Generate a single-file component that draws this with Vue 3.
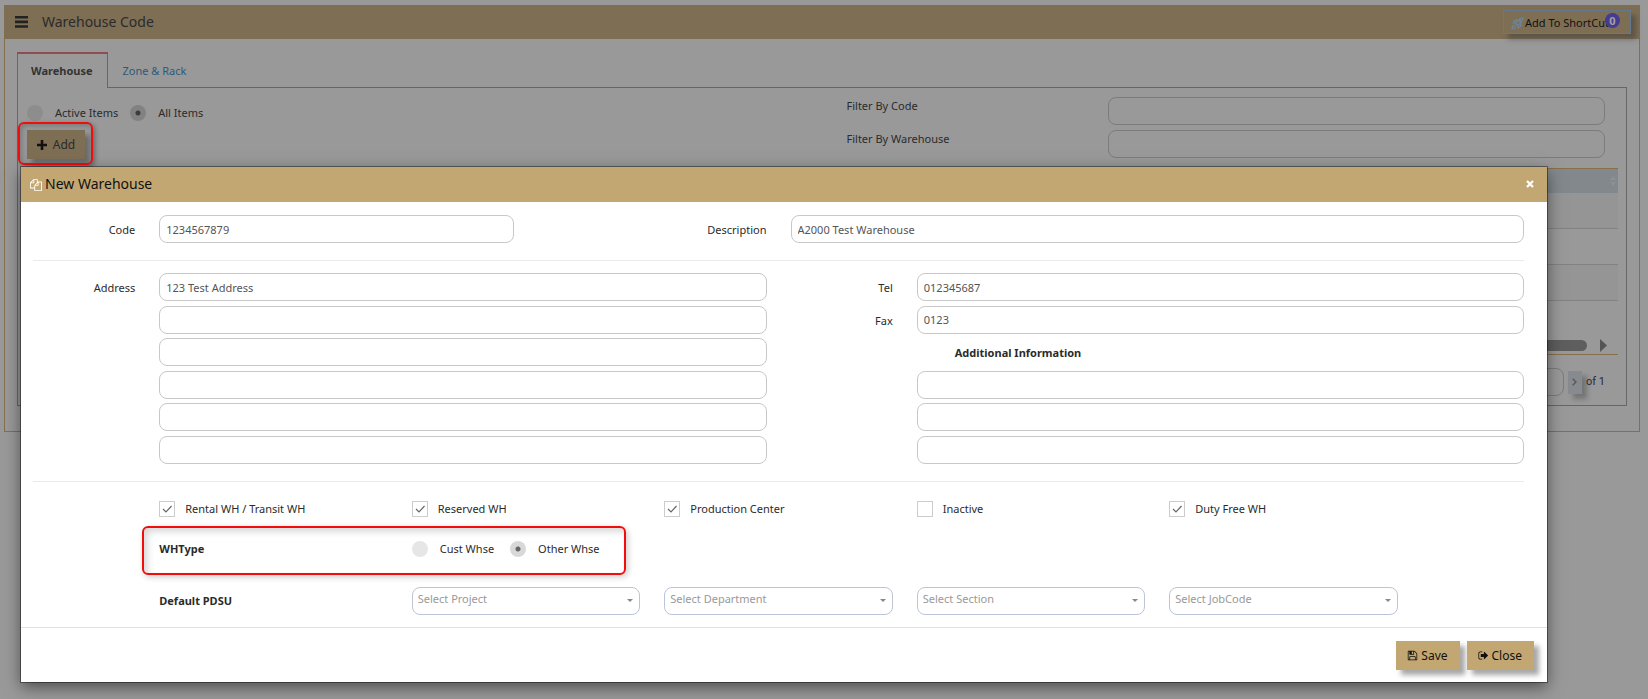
<script setup>
import { ref } from 'vue'

const filter = ref('all')
const whType = ref('other')
const code = ref('1234567879')
const description = ref('A2000 Test Warehouse')
const address = ref(['123 Test Address', '', '', '', '', ''])
const tel = ref('012345687')
const fax = ref('0123')
const extra = ref(['', '', ''])
const flags = ref([
  { id: 'rental', label: 'Rental WH / Transit WH', on: true },
  { id: 'reserved', label: 'Reserved WH', on: true },
  { id: 'production', label: 'Production Center', on: true },
  { id: 'inactive', label: 'Inactive', on: false },
  { id: 'duty', label: 'Duty Free WH', on: true }
])
const pdsu = ['Project', 'Department', 'Section', 'JobCode']
const rows = [1, 2, 3, 4]
</script>

<template>
  <div class="page">
    <section class="panel">
      <header class="panel-head">
        <button class="menu" type="button" aria-label="Menu">
          <svg viewBox="0 0 13 12"><path d="M0 0h13v2.600H0zM0 4.600h13v2.600H0zM0 9.200h13v2.600H0z" /></svg>
        </button>
        <h1>Warehouse Code</h1>
        <button class="shortcut" type="button">
          <svg viewBox="0 0 24 24" fill="none" stroke="currentColor" stroke-width="2.400">
            <path d="M9 12C12 5 16 2 22 2c0 6-3 10-10 13zM9 11H4l3-5h5M13 15v5l5-3v-5M5 15c-2 1-3 3-3 7 4 0 6-1 7-3M6 18l3-3" />
            <circle cx="16.500" cy="7.500" r="1.500" />
          </svg>
          <span>Add To ShortCut</span>
          <b class="badge">0</b>
        </button>
      </header>

      <div class="panel-body">
        <nav class="tabs">
          <a class="tab active" href="#warehouse">Warehouse</a>
          <a class="tab" href="#zone">Zone &amp; Rack</a>
        </nav>
        <div class="tab-body">
          <div class="tools">
            <div>
              <div class="radios">
                <label><input v-model="filter" type="radio" name="filter" value="active"><span>Active Items</span></label>
                <label><input v-model="filter" type="radio" name="filter" value="all"><span>All Items</span></label>
              </div>
              <div class="add-wrap">
                <button class="add" type="button">
                  <svg viewBox="0 0 10 10"><path d="M3.700 0h2.600v3.700H10v2.600H6.300V10H3.700V6.300H0V3.700h3.700z" /></svg>
                  Add
                </button>
                <div class="marker add-marker"></div>
              </div>
            </div>
            <div class="filters">
              <label for="f-code">Filter By Code</label>
              <input id="f-code" type="text">
              <label for="f-wh">Filter By Warehouse</label>
              <input id="f-wh" type="text">
            </div>
          </div>

          <table class="grid-table">
            <thead>
              <tr><th><svg viewBox="0 0 6 10"><path d="M3 0l3 4H0zM3 10l3-4H0z" /></svg></th></tr>
            </thead>
            <tbody>
              <tr v-for="r in rows" :key="r"><td></td></tr>
            </tbody>
          </table>
          <div class="scroll">
            <div class="thumb"></div>
            <svg viewBox="0 0 7 13"><path d="M0 0l7 6.500L0 13z" /></svg>
          </div>
          <div class="pager">
            <input type="text" value="1" aria-label="Page">
            <button type="button" aria-label="Next page">
              <svg viewBox="0 0 5 8" fill="none" stroke="currentColor" stroke-width="1.300"><path d="M.7.700L4 4 .7 7.300" /></svg>
            </button>
            <span>of 1</span>
          </div>
        </div>
      </div>
    </section>

    <div class="dialog" role="dialog" aria-labelledby="dlg-title">
      <header class="dialog-head">
        <svg viewBox="0 0 1792 1792"><path d="M1696 384q40 0 68 28t28 68v1216q0 40-28 68t-68 28h-960q-40 0-68-28t-28-68v-288h-544q-40 0-68-28t-28-68v-672q0-40 20-88t48-76l408-408q28-28 76-48t88-20h416q40 0 68 28t28 68v328q68-40 128-40h416zm-544 213l-299 299h299v-299zm-640-384l-299 299h299v-299zm196 647l316-316v-416h-384v416q0 40-28 68t-68 28h-416v640h512v-256q0-40 20-88t48-76zm956 804v-1152h-384v416q0 40-28 68t-68 28h-416v640h896z" /></svg>
        <h2 id="dlg-title">New Warehouse</h2>
        <button type="button" aria-label="Close dialog">
          <svg viewBox="0 0 8 8" fill="none" stroke="currentColor" stroke-width="2.200"><path d="M1 1l6 6M7 1L1 7" /></svg>
        </button>
      </header>

      <div class="dialog-body">
        <div class="cols">
          <label class="lab" for="code">Code</label>
          <div class="w3"><input id="code" v-model="code" type="text"></div>
          <label class="lab w2" for="desc">Description</label>
          <div class="w6"><input id="desc" v-model="description" type="text"></div>
        </div>
        <hr>
        <div class="cols address">
          <label class="lab" for="addr0">Address</label>
          <div class="w5"><input id="addr0" v-model="address[0]" type="text"></div>
          <label class="lab" for="tel">Tel</label>
          <div class="w5"><input id="tel" v-model="tel" type="text"></div>

          <div class="w5 from2"><input v-model="address[1]" type="text" aria-label="Address line 2"></div>
          <label class="lab" for="fax">Fax</label>
          <div class="w5"><input id="fax" v-model="fax" type="text"></div>

          <div class="w5 from2"><input v-model="address[2]" type="text" aria-label="Address line 3"></div>
          <strong class="extra">Additional Information</strong>

          <template v-for="n in 3" :key="n">
            <div class="w5 from2"><input v-model="address[n + 2]" type="text" :aria-label="'Address line ' + (n + 3)"></div>
            <div class="w5 from8"><input v-model="extra[n - 1]" type="text" :aria-label="'Additional information ' + n"></div>
          </template>
        </div>
        <hr>
        <div class="cols flags">
          <label v-for="f in flags" :key="f.id" class="check">
            <span class="box">
              <input v-model="f.on" type="checkbox">
              <svg v-if="f.on" viewBox="0 0 16 16" fill="none" stroke="currentColor" stroke-width="1.200"><path d="M4 8l3 3 5.500-6" /></svg>
            </span>
            {{ f.label }}
          </label>
        </div>
        <div class="cols type">
          <strong class="from2 w2">WHType</strong>
          <div class="radios w4">
            <label><input v-model="whType" type="radio" name="wh" value="cust"><span>Cust Whse</span></label>
            <label><input v-model="whType" type="radio" name="wh" value="other"><span>Other Whse</span></label>
          </div>
          <div class="marker type-marker"></div>
        </div>
        <div class="cols pdsu">
          <strong class="from2 w2">Default PDSU</strong>
          <div v-for="p in pdsu" :key="p" class="w2">
            <div class="select">
              <select :aria-label="p"><option>Select {{ p }}</option></select>
              <svg viewBox="0 0 6 3"><path d="M0 0h6L3 3z" /></svg>
            </div>
          </div>
        </div>
      </div>

      <footer class="dialog-foot">
        <button type="button">
          <svg viewBox="0 0 1792 1792"><path d="M512 1536h768v-384h-768v384zm896 0h128v-896q0-14-10-38.500t-20-34.500l-281-281q-10-10-34-20t-39-10v416q0 40-28 68t-68 28h-576q-40 0-68-28t-28-68v-416h-128v1280h128v-416q0-40 28-68t68-28h832q40 0 68 28t28 68v416zm-384-928v-320q0-13-9.500-22.500t-22.500-9.500h-192q-13 0-22.500 9.500t-9.500 22.500v320q0 13 9.500 22.500t22.500 9.500h192q13 0 22.500-9.500t9.500-22.500zm640 32v928q0 40-28 68t-68 28h-1344q-40 0-68-28t-28-68v-1344q0-40 28-68t68-28h928q40 0 88 20t76 48l280 280q28 28 48 76t20 88z" /></svg>
          Save
        </button>
        <button type="button">
          <svg viewBox="0 0 1792 1792"><path d="M704 1440q0 4 1 20t.5 26.500-3 23.500-10 19.500-20.500 6.500h-320q-119 0-203.500-84.500t-84.500-203.500v-704q0-119 84.500-203.500t203.500-84.500h320q13 0 22.500 9.500t9.500 22.500q0 4 1 20t.5 26.500-3 23.500-10 19.500-20.500 6.500h-320q-66 0-113 47t-47 113v704q0 66 47 113t113 47h312l11.500 1 11.500 3 8 5.500 7 9 2 13.500zm928-544q0 26-19 45l-544 544q-19 19-45 19t-45-19-19-45v-288h-448q-26 0-45-19t-19-45v-384q0-26 19-45t45-19h448v-288q0-26 19-45t45-19 45 19l544 544q19 19 19 45z" /></svg>
          Close
        </button>
      </footer>
    </div>
  </div>
</template>

<style>
body { background: #999; }
</style>

<style scoped>
* { box-sizing: border-box; }
.page {
  position: relative;
  min-height: 100vh;
  padding: 5px 8px 0 4px;
  background: #999;
  color: #2b2b2b;
  font: 11px/16px "Noto Sans", "Open Sans", sans-serif;
}
button, input, select { font: inherit; color: inherit; margin: 0; padding: 0; border: 0; background: none; border-radius: 0; }
svg { display: block; fill: currentColor; }
svg[fill="none"] { fill: none; }
h1, h2 { margin: 0; font-size: 14px; line-height: 20px; font-weight: 400; }

.panel { border: 1px solid #85704b; border-top: 0; }
.panel-head { display: flex; align-items: center; height: 34px; padding: 0 9px 0 11px; background: #7e6e54; margin: 0 -1px; }
.menu { margin-right: 14px; color: #222; }
.menu svg { width: 13px; height: 12px; }
.shortcut {
  position: relative; display: flex; align-items: center; gap: 1px;
  width: 128px; height: 24px; margin-left: auto; padding: 2px 0 0 7px;
  border: 1px solid #647a8c; color: #111; box-shadow: 5px 5px 5px rgba(60, 60, 60, .5);
}
.shortcut svg { width: 13px; height: 13px; color: #6f8494; }
.badge {
  position: absolute; top: 2px; right: 10px; width: 15px; height: 15px; border-radius: 50%;
  background: #443c92; color: #a5a0a0; line-height: 15px; text-align: center;
}

.panel-body { padding: 13px 12px 25px; }
.tabs { display: flex; height: 35px; }
.tab { padding: 11px 15px 0; color: #2f587a; text-decoration: none; }
.tab.active {
  position: relative; z-index: 1; padding: 9px 14px 0 13px; margin-bottom: -1px;
  border: 1px solid #666; border-top: 2px solid #914b53; border-bottom: 0;
  background: #999; color: #333; font-weight: 700;
}
.tab-body { border: 1px solid #666; padding: 9px 8px 9px 9px; }
.tools { display: grid; grid-template-columns: 1fr 1fr; }
.radios { display: flex; align-items: center; gap: 12px; }
.radios label { display: flex; align-items: center; gap: 12px; }
.radios input {
  appearance: none; width: 16px; height: 16px; border-radius: 50%; background: #e6e6e6;
}
.radios input:checked { background: radial-gradient(circle, #666 2px, #d8d8d8 3px); }
.tools .radios { height: 33px; padding-bottom: 2px; }
.tools .radios input { background: #8d8d8d; }
.tools .radios input:checked { background: radial-gradient(circle, #3c3c3c 2px, #828282 3px); }
.add-wrap { position: relative; width: 58px; }
.add {
  display: flex; align-items: center; justify-content: center; gap: 6px;
  width: 58px; height: 29px; background: #7e6e54; font-size: 12px; color: #2b2b2b;
  box-shadow: 5px 5px 5px rgba(60, 60, 60, .5);
}
.add svg { width: 10px; height: 10px; color: #111; }
.marker { position: absolute; border: 2px solid #f20d0d; border-radius: 6px; pointer-events: none; }
.add-marker { inset: -8px -8px -6px -9px; box-shadow: 2px 2px 5px rgba(0, 0, 0, .3), inset 2px 2px 5px rgba(0, 0, 0, .2); }
.filters { display: grid; grid-template-columns: 261px 1fr; align-content: start; row-gap: 5px; padding: 0 13px 0 24px; }
.filters label { padding-top: 1px; }
.filters input { height: 28px; border: 1px solid #7c7c7c; border-radius: 8px; padding: 0 6px; }

.grid-table { width: 100%; margin-top: 9px; border-collapse: separate; border-spacing: 0; border-top: 1px solid #85704b; }
.grid-table th { height: 24px; padding: 0 2px; background: #82888c; color: #8f9191; }
.grid-table th svg { width: 6px; height: 10px; margin-left: auto; }
.grid-table td { height: 36px; padding: 0; border-bottom: 1px solid #828282; }
.grid-table tr:nth-child(odd) td { background: #959595; }
.grid-table tr:last-child td { border: 0; background: none; }
.scroll { display: flex; align-items: center; gap: 13px; height: 18px; padding-right: 11px; border-bottom: 1px solid #85704b; }
.thumb { flex: 1; height: 11px; border-radius: 6px; background: #5e5e5e; }
.scroll svg { width: 7px; height: 13px; color: #555; }
.pager { display: flex; align-items: center; justify-content: flex-end; gap: 4px; padding: 13px 13px 0 0; font-family: Roboto, sans-serif; }
.pager input { width: 40px; height: 28px; border: 1px solid #7c7c7c; border-radius: 8px; text-align: center; color: #345; }
.pager button { display: grid; place-items: center; width: 14px; height: 23px; background: #878b8f; color: #555; box-shadow: 5px 5px 5px rgba(60, 60, 60, .4); }
.pager button svg { width: 5px; height: 8px; }

.dialog {
  position: absolute; top: 167px; left: 21px; right: 101px;
  background: #fff; box-shadow: 0 0 0 1px rgba(0, 0, 0, .4), 0 5px 15px rgba(0, 0, 0, .5);
}
.dialog-head { display: flex; align-items: center; height: 35px; padding: 0 13px 0 9px; background: #c3a772; color: #111; }
.dialog-head > svg { width: 12px; height: 12px; margin-right: 3px; color: #fff; }
.dialog-head h2 { padding-bottom: 2px; }
.dialog-head button { margin-left: auto; padding-bottom: 2px; color: #fff; }
.dialog-head button svg { width: 8px; height: 8px; }
.dialog-body { padding: 13px 11px 12px 0; }
.cols { position: relative; display: grid; grid-template-columns: repeat(12, 1fr); align-items: center; }
.cols > * { padding: 0 12px; }
.w2 { grid-column-end: span 2; }
.w3 { grid-column-end: span 3; }
.w4 { grid-column-end: span 4; }
.w5 { grid-column-end: span 5; }
.w6 { grid-column-end: span 6; }
.from2 { grid-column-start: 2; }
.from8 { grid-column-start: 8; }
.cols .lab { padding-top: 2px; text-align: right; }
.cols input[type="text"] {
  display: block; width: 100%; height: 28px; padding: 0 6px;
  border: 1px solid #c8c8c8; border-radius: 8px; color: #555; outline: 0;
}
hr { height: 1px; margin: 17px 12px 12px; border: 0; background: #eaeaea; }
.address { grid-template-rows: repeat(6, 1fr); row-gap: 4px; min-height: 191px; }
.cols .extra { grid-column: 8 / span 5; padding: 2px 0 0 50px; }
.flags { grid-template-columns: 1fr repeat(5, 2fr) 1fr; margin-top: 19px; }
.check { display: flex; align-items: center; gap: 10px; }
.check:first-child { grid-column-start: 2; }
.box { position: relative; display: block; width: 16px; height: 16px; color: #666; }
.box input { display: block; appearance: none; width: 16px; height: 16px; border: 1px solid #ccc; }
.box svg { position: absolute; inset: 0; }
.type { height: 49px; margin-top: 9px; padding-bottom: 4px; }
.type .radios { gap: 16px; }
.type-marker { inset: 0 910px 0 121px; box-shadow: 2px 2px 6px rgba(0, 0, 0, .2), inset 4px 4px 6px rgba(0, 0, 0, .15); }
.pdsu { margin-top: 12px; }
.select { position: relative; }
.select select {
  display: block; appearance: none; width: 100%; height: 28px; padding: 0 20px 4px 5px;
  border: 1px solid #bcc5d8; border-radius: 8px; color: #999;
}
.select svg { position: absolute; right: 7px; top: 12px; width: 6px; height: 3px; color: #888; }
.dialog-foot { display: flex; justify-content: flex-end; gap: 7px; padding: 13px 13px 12px; border-top: 1px solid #e0e0e0; }
.dialog-foot button {
  display: flex; align-items: center; gap: 3px; height: 29px; padding: 0 12px 0 11px;
  background: #c3a772; color: #111; font-size: 12px; box-shadow: 5px 5px 5px rgba(0, 0, 0, .35);
}
.dialog-foot svg { width: 11px; height: 11px; }
</style>
